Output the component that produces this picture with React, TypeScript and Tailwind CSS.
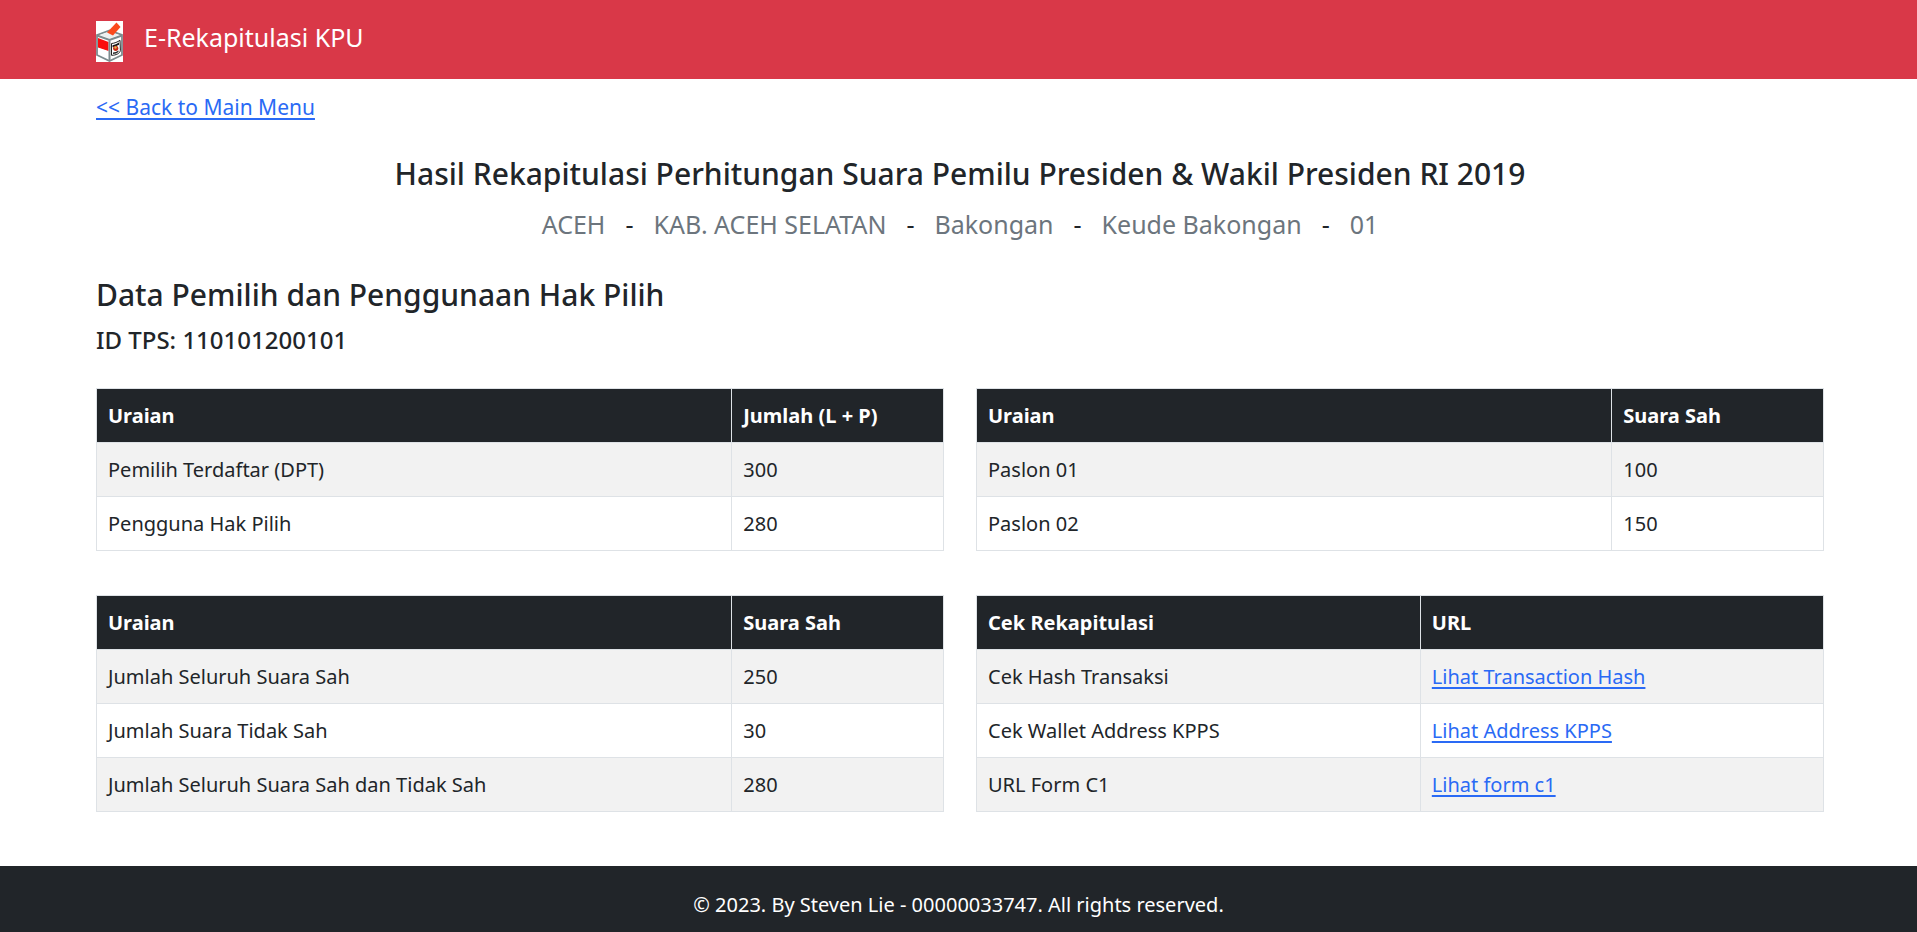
import type { ReactNode } from "react";

type Row = [string, ReactNode];

function DataTable({ head, rows, first }: { head: [string, string]; rows: Row[]; first: string }) {
  return (
    <table className="w-full table-fixed border-collapse text-left text-[20px] leading-[29px]">
      <thead>
        <tr className="bg-[#212529] text-white">
          <th className={`${first} border border-[#dee2e6] px-[11px] py-3 font-bold`}>{head[0]}</th>
          <th className="border border-[#dee2e6] px-[11px] py-3 font-bold">{head[1]}</th>
        </tr>
      </thead>
      <tbody>
        {rows.map(([label, value]) => (
          <tr key={label} className="odd:bg-[#f2f2f2]">
            <td className="border border-[#dee2e6] px-[11px] py-3">{label}</td>
            <td className="border border-[#dee2e6] px-[11px] py-3">{value}</td>
          </tr>
        ))}
      </tbody>
    </table>
  );
}

function TextLink({ children }: { children: ReactNode }) {
  return (
    <a href="#" className="text-[#2a6af5] underline decoration-2 underline-offset-3">
      {children}
    </a>
  );
}

function BallotBox() {
  return (
    <svg viewBox="0 0 27 41" className="h-[41px] w-[27px]" aria-hidden="true">
      <path d="M0 0h27v41H0z" fill="#fff" />
      <path d="M1 14 13.500 9.500 26 14v20l-12.500 6L1 34z" fill="#fff" stroke="#7d8b8e" strokeWidth="1.800" />
      <path d="M4 14 13 11l10 3-9.500 3.500z" fill="#edf0f0" />
      <path d="M1 14.500 13.500 19 26 14.500" fill="none" stroke="#7d8b8e" strokeWidth="2" />
      <path d="M11 11.500 20.500 1.500 24.500 6 17 14.500z" fill="#fb4a1d" />
      <path d="m2 17 10.500 4v9L2 26.500z" fill="#fb0d0d" />
      <path d="m2 27 10.500 3.500v7L2 33z" fill="#fff" />
      <path d="M13.500 19.500v20" stroke="#7d8b8e" strokeWidth="2" />
      <path d="M15.500 22.500c3-.2 6-1.500 8.500-3.200l.4 10c-.3 3.200-4.400 5-8.900 5z" fill="#fff" stroke="#222" strokeWidth="1" />
      <path d="M16.500 24.200q3.500-.6 6.500-2.700v2.300q-3 2-6.500 2.400z" fill="#16181a" />
      <circle cx="19.700" cy="27.300" r="2.600" fill="#c52a17" />
      <circle cx="19.500" cy="26.500" r="1.200" fill="#e0b848" />
      <path d="M17 31.500q3 0 5.500-2v1.500q-2 2-5.500 2z" fill="#24282a" />
    </svg>
  );
}

export default function App() {
  const place = ["ACEH", "KAB. ACEH SELATAN", "Bakongan", "Keude Bakongan", "01"];
  return (
    <div className="flex min-h-screen flex-col bg-white font-['Noto_Sans','Open_Sans',sans-serif] text-[#212529]">
      <header className="flex items-start gap-[21px] bg-[#d93848] pt-[21px] pr-[93px] pb-[17px] pl-24">
        <BallotBox />
        <span className="text-[25px] leading-[33px] text-white">E-Rekapitulasi KPU</span>
      </header>
      <main className="grow pl-24 pr-[93px] pt-[13px] pb-12">
        <nav className="text-[21px] leading-[30px]">
          <TextLink>&lt;&lt; Back to Main Menu</TextLink>
        </nav>
        <h1 className="mt-[33px] text-center text-[30px] leading-[38px] font-medium">
          Hasil Rekapitulasi Perhitungan Suara Pemilu Presiden &amp; Wakil Presiden RI 2019
        </h1>
        <p className="mt-[15px] flex flex-wrap justify-center gap-5 text-[25px] leading-[32px]">
          {place.map((name, i) => (
            <span key={name} className="flex gap-5">
              {i > 0 && <span>-</span>}
              <span className="text-[#6c757d]">{name}</span>
            </span>
          ))}
        </p>
        <h2 className="mt-[36px] text-[30px] leading-[38px] font-medium">Data Pemilih dan Penggunaan Hak Pilih</h2>
        <h3 className="mt-[10px] text-[24px] leading-[32px] font-medium">ID TPS: 110101200101</h3>
        <div className="mt-8 grid grid-cols-2 gap-x-8 gap-y-11">
          <DataTable
            first="w-3/4"
            head={["Uraian", "Jumlah (L + P)"]}
            rows={[["Pemilih Terdaftar (DPT)", "300"], ["Pengguna Hak Pilih", "280"]]}
          />
          <DataTable first="w-3/4" head={["Uraian", "Suara Sah"]} rows={[["Paslon 01", "100"], ["Paslon 02", "150"]]} />
          <DataTable
            first="w-3/4"
            head={["Uraian", "Suara Sah"]}
            rows={[
              ["Jumlah Seluruh Suara Sah", "250"],
              ["Jumlah Suara Tidak Sah", "30"],
              ["Jumlah Seluruh Suara Sah dan Tidak Sah", "280"],
            ]}
          />
          <DataTable
            first="w-[52.4%]"
            head={["Cek Rekapitulasi", "URL"]}
            rows={[
              ["Cek Hash Transaksi", <TextLink>Lihat Transaction Hash</TextLink>],
              ["Cek Wallet Address KPPS", <TextLink>Lihat Address KPPS</TextLink>],
              ["URL Form C1", <TextLink>Lihat form c1</TextLink>],
            ]}
          />
        </div>
      </main>
      <footer className="bg-[#212529] pt-6 pb-3 text-center text-[20px] leading-[30px] text-white">
        © 2023. By Steven Lie - 00000033747. All rights reserved.
      </footer>
    </div>
  );
}
